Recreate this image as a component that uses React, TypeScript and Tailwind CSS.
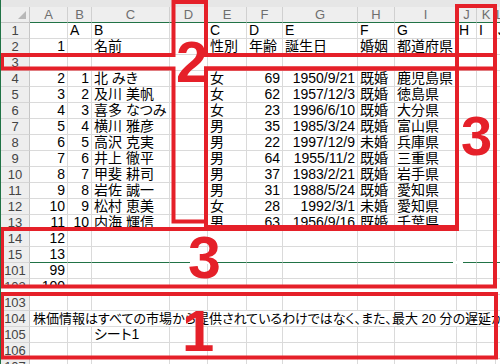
import React from "react";

const GRID =
  "grid grid-cols-[29px_38px_24px_78px_38px_39px_36px_75px_37px_62px_20px_19px_1fr]";

type Row = { n: string; cells: string[]; green?: boolean; full?: string };

const data: string[][] = [
  ["2", "1", "北 みき", "", "女", "69", "1950/9/21", "既婚", "鹿児島県"],
  ["3", "2", "及川 美帆", "", "女", "62", "1957/12/3", "既婚", "徳島県"],
  ["4", "3", "喜多 なつみ", "", "女", "23", "1996/6/10", "既婚", "大分県"],
  ["5", "4", "横川 雅彦", "", "男", "35", "1985/3/24", "既婚", "富山県"],
  ["6", "5", "高沢 克実", "", "男", "22", "1997/12/9", "未婚", "兵庫県"],
  ["7", "6", "井上 徹平", "", "男", "64", "1955/11/2", "既婚", "三重県"],
  ["8", "7", "甲斐 耕司", "", "男", "37", "1983/2/21", "既婚", "岩手県"],
  ["9", "8", "岩佐 誠一", "", "男", "31", "1988/5/24", "既婚", "愛知県"],
  ["10", "9", "松村 恵美", "", "女", "28", "1992/3/1", "未婚", "愛知県"],
  ["11", "10", "内海 輝信", "", "男", "63", "1956/9/16", "既婚", "千葉県"],
];

const rows: Row[] = [
  { n: "1", cells: ["", "A", "B", "", "C", "D", "E", "F", "G", "H", "I", "J"] },
  { n: "2", cells: ["1", "", "名前", "", "性別", "年齢", "誕生日", "婚姻", "都道府県"] },
  { n: "3", cells: [] },
  ...data.map((d, i) => ({ n: String(i + 4), cells: d })),
  { n: "14", cells: ["12"] },
  { n: "15", cells: ["13"], green: true },
  { n: "101", cells: ["99"] },
  { n: "102", cells: ["100"] },
  { n: "103", cells: [] },
  {
    n: "104",
    cells: [],
    full: "株価情報はすべての市場から提供されているわけではなく、また、最大 20 分の遅延があります。",
  },
  { n: "105", cells: ["", "", "シート1"] },
  { n: "106", cells: [] },
  { n: "107", cells: [] },
];

const letters = ["A", "B", "C", "D", "E", "F", "G", "H", "I", "J", "K", "L"];

function Cell({ text, green, last }: { text: string; green?: boolean; last?: boolean }) {
  const num = /^[\d/]+$/.test(text);
  return (
    <div
      className={`h-4 flex items-center whitespace-nowrap overflow-hidden px-[2px] border-b ${
        last ? "" : "border-r"
      } border-[#dadada] ${green ? "border-b-[#217346]" : ""} ${
        num ? "justify-end" : "justify-start"
      }`}
    >
      {text}
    </div>
  );
}

function SheetRow({ r }: { r: Row }) {
  return (
    <div className={`${GRID} h-4`}>
      <div className="h-4 flex items-center justify-center bg-[#eeeeee] border-r border-b border-r-[#c6c6c6] border-b-[#d6d6d6] text-[13px] text-[#444]">
        {r.n}
      </div>
      {r.full ? (
        <div className="col-span-12 h-4 flex items-center whitespace-nowrap overflow-hidden pl-[3px] border-b border-[#dadada] text-[13px]">
          {r.full}
        </div>
      ) : (
        letters.map((_, j) => (
          <Cell key={j} text={r.cells[j] ?? ""} green={r.green} last={j === 11} />
        ))
      )}
    </div>
  );
}

export default function App() {
  return (
    <div className="relative w-[500px] h-[364px] overflow-hidden bg-white border-l border-[#217346] font-['Liberation_Sans','Noto_Sans_CJK_JP',sans-serif] text-[14px] text-black [font-feature-settings:'palt']">
      <div className="h-[7px] bg-[#e6e6e6]" />
      <div className={`${GRID} h-4`}>
        <div className="h-4 bg-[#eeeeee] border-r border-b border-[#c6c6c6] flex items-end justify-end pr-[3px] pb-[3px]">
          <svg width="8" height="8" viewBox="0 0 8 8">
            <polygon points="8,0 8,8 0,8" fill="#b8b8b8" />
          </svg>
        </div>
        {letters.map((l, j) => (
          <div
            key={l}
            className={`h-4 flex items-center justify-center bg-[#eeeeee] border-b border-b-[#217346] ${
              j === 11 ? "" : "border-r border-r-[#d0d0d0]"
            } text-[13px] text-[#6e6e6e]`}
          >
            {l}
          </div>
        ))}
      </div>
      {rows.map((r) => (
        <SheetRow key={r.n} r={r} />
      ))}

      {/* annotation overlay */}
      <div className="absolute left-0 top-[288px] w-[500px] h-[4px] bg-white" />
      <div className="absolute left-[452px] top-[261px] w-[10px] h-[3px] bg-white" />
      <div className="absolute left-[189px] top-[261px] w-[24px] h-[3px] bg-white" />
      <svg
        className="absolute left-0 top-0"
        width="500"
        height="364"
        fill="none"
        stroke="#e52029"
        strokeWidth="4"
      >
        <path d="M1 55 H172.5 V2 H205 V55 H494 V68.5 H205 V221.5 H172.5 V68.5 H1 Z" />
        <path d="M205 68.5 H456 V227 H205 Z" />
        <path d="M456 6 H494 V286.5 H1 V229 H456 Z" />
        <path d="M1 294 H495 V357.5 H1 Z" />
      </svg>
      <span className="absolute left-[175px] top-[34px] text-[57px] leading-none font-bold text-[#e52029]">
        2
      </span>
      <span className="absolute left-[460px] top-[108px] text-[56px] leading-none font-bold text-[#e52029]">
        3
      </span>
      <span className="absolute left-[187px] top-[229px] text-[59px] leading-none font-bold text-[#e52029]">
        3
      </span>
      <span className="absolute left-[181px] top-[302px] text-[58px] leading-none font-bold text-[#e52029]">
        1
      </span>
    </div>
  );
}
